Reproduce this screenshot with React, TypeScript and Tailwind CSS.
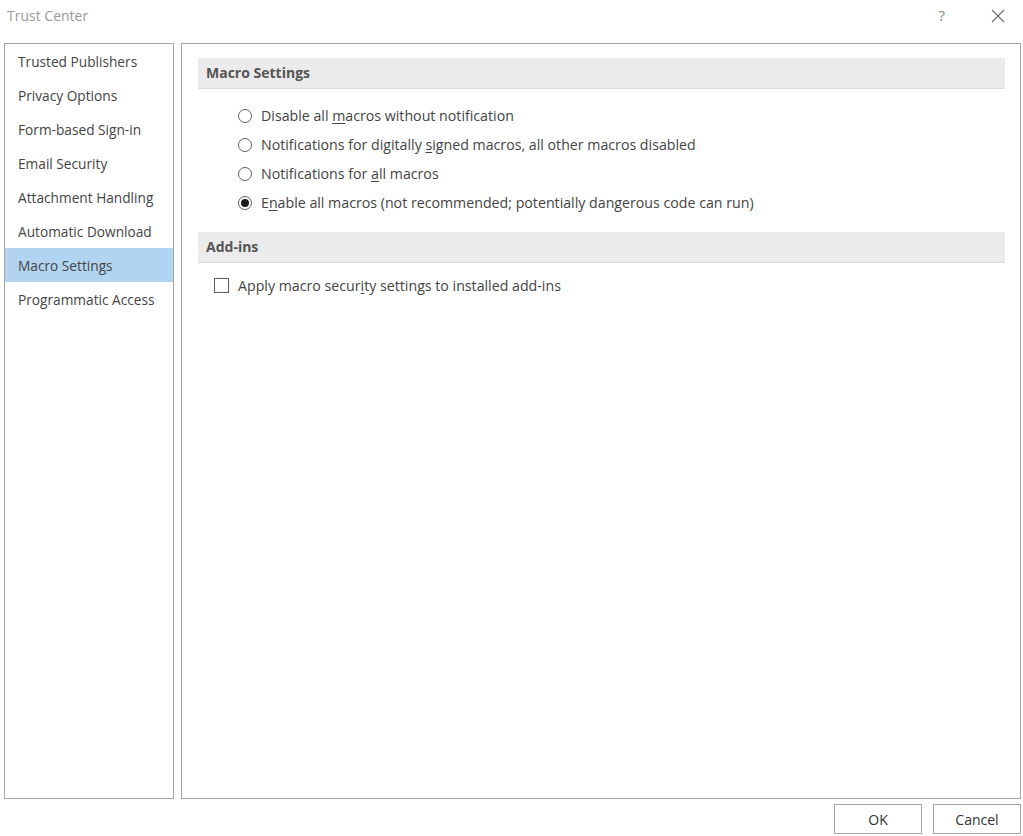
import React from "react";

const font = { fontFamily: '"Open Sans", "Noto Sans", sans-serif' };

function Radio({ checked, children }: { checked?: boolean; children: React.ReactNode }) {
  return (
    <div className="flex items-center h-[29px] pl-[40px]">
      <span className="w-[14px] h-[14px] rounded-full border border-[#5f5f5f] bg-white flex items-center justify-center shrink-0">
        {checked && <span className="w-[8px] h-[8px] rounded-full bg-[#1a1a1a]" />}
      </span>
      <span className="ml-[9px] text-[14.2px] text-[#444444]">{children}</span>
    </div>
  );
}

export default function App() {
  const items = [
    "Trusted Publishers",
    "Privacy Options",
    "Form-based Sign-in",
    "Email Security",
    "Attachment Handling",
    "Automatic Download",
    "Macro Settings",
    "Programmatic Access",
  ];
  return (
    <div className="w-[1023px] h-[836px] bg-white flex flex-col overflow-hidden" style={font}>
      <div className="h-[43px] flex items-start justify-between shrink-0">
        <span className="text-[14px] text-[#9a9a9a] pl-[7px] pt-[5px]">Trust Center</span>
        <div className="flex items-start">
          <span className="text-[15px] text-[#8a8a8a] mt-[4px] mr-[46px]">?</span>
          <svg width="14" height="14" viewBox="0 0 14 14" className="mt-[9px] mr-[18px]">
            <path d="M1 1 L13 13 M13 1 L1 13" stroke="#6a6a6a" strokeWidth="1.1" fill="none" />
          </svg>
        </div>
      </div>
      <div className="flex h-[756px] pl-[4px] pr-[2px] gap-[7px] shrink-0">
        <div className="w-[170px] border border-[#a6a6a6] flex flex-col">
          {items.map((it) => (
            <div
              key={it}
              className={`h-[34px] flex items-center pl-[13px] pt-[2px] text-[13.7px] text-[#444444] ${
                it === "Macro Settings" ? "bg-[#b1d5f0]" : ""
              }`}
            >
              {it}
            </div>
          ))}
        </div>
        <div className="flex-1 border border-[#a6a6a6] pt-[14px] pl-[16px] pr-[15px]">
          <div className="h-[31px] bg-[#ebebeb] border-b border-[#dcdcdc] flex items-center pl-[8px] pb-[2px] text-[14px] font-bold text-[#555555]">
            Macro Settings
          </div>
          <div className="pt-[12px]">
            <Radio>
              Disable all <u className="underline-offset-2">m</u>acros without notification
            </Radio>
            <Radio>
              Notifications for digitally <u className="underline-offset-2">s</u>igned macros, all other macros disabled
            </Radio>
            <Radio>
              Notifications for <u className="underline-offset-2">a</u>ll macros
            </Radio>
            <Radio checked>
              E<u className="underline-offset-2">n</u>able all macros (not recommended; potentially dangerous code can run)
            </Radio>
          </div>
          <div className="mt-[15px] h-[31px] bg-[#ebebeb] border-b border-[#dcdcdc] flex items-center pl-[8px] pb-[2px] text-[14px] font-bold text-[#555555]">
            Add-ins
          </div>
          <div className="flex items-center h-[29px] mt-[8px] pl-[16px]">
            <span className="w-[15px] h-[15px] border border-[#5f5f5f] bg-white shrink-0" />
            <span className="ml-[9px] text-[14.2px] text-[#444444]">
              Apply macro secur<u className="underline-offset-2">i</u>ty settings to installed add-ins
            </span>
          </div>
        </div>
      </div>
      <div className="flex justify-end gap-[11px] pt-[5px] pr-[2px]">
        <button className="w-[88px] h-[30px] border border-[#a6a6a6] bg-white text-[14px] text-[#333333]">OK</button>
        <button className="w-[88px] h-[30px] border border-[#a6a6a6] bg-white text-[14px] text-[#333333]">Cancel</button>
      </div>
    </div>
  );
}
